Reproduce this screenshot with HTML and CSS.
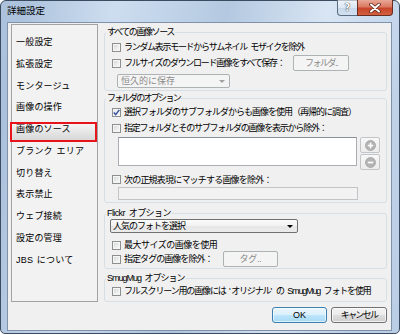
FILE: index.html
```html
<!DOCTYPE html>
<html lang="ja">
<head>
<meta charset="utf-8">
<title>詳細設定</title>
<link rel="stylesheet" href="styles.css">
</head>
<body>
<div class="window">
  <div class="titlebar">
    <span class="title">詳細設定</span>
    <div class="caption">
      <span class="cbtn help">?</span>
      <span class="cbtn close"><svg width="14" height="10" viewBox="0 0 14 10"><path d="M3 1.5 L11 8.5 M11 1.5 L3 8.5" stroke="#5a2418" stroke-width="3.6" stroke-linecap="round"/><path d="M3 1.5 L11 8.5 M11 1.5 L3 8.5" stroke="#fff" stroke-width="2" stroke-linecap="round"/></svg></span>
    </div>
  </div>
  <div class="client">
    <div class="body">
      <ul class="nav">
        <li><span class="t">一般設定</span></li>
        <li><span class="t">拡張設定</span></li>
        <li><span class="t">モンタージュ</span></li>
        <li><span class="t">画像の操作</span></li>
        <li class="sel"><span class="mark"></span><span class="t">画像のソース</span></li>
        <li><span class="t">ブランク エリア</span></li>
        <li><span class="t">切り替え</span></li>
        <li><span class="t">表示禁止</span></li>
        <li><span class="t">ウェブ接続</span></li>
        <li><span class="t">設定の管理</span></li>
        <li><span class="t">JBS について</span></li>
      </ul>
      <div class="panel">
        <fieldset class="group g1">
          <legend class="tight-14">すべての画像ソース</legend>
          <div class="row r16 first"><span class="cb"></span><span class="tight-13 wide-sp">ランダム表示モードからサムネイル モザイクを除外</span></div>
          <div class="row r16"><span class="cb"></span><span class="lbl-folder tight-13">フルサイズのダウンロード画像をすべて保存：</span><span class="btn dis folder tight-15">フォルダ..</span></div>
          <div class="combo dis c1"><span>恒久的に保存</span><span class="arrow"></span></div>
        </fieldset>
        <fieldset class="group g2">
          <legend class="tight-17">フォルダのオプション</legend>
          <div class="row r16"><span class="cb on"><svg width="7" height="7" viewBox="0 0 7 7"><path d="M0.8 3.6 L2.7 5.6 L6.3 0.9" fill="none" stroke="#3651a0" stroke-width="1.5"/></svg></span><span class="tight-10">選択フォルダのサブフォルダからも画像を使用（再帰的に調査）</span></div>
          <div class="row r16"><span class="cb"></span><span class="tight-12">指定フォルダとそのサブフォルダの画像を表示から除外：</span></div>
          <div class="listrow">
            <div class="listbox"></div>
            <div class="pm">
              <span class="pmbtn"><svg width="11" height="11" viewBox="0 0 11 11"><circle cx="5.5" cy="5.5" r="5" fill="#b4b4b4" stroke="#a2a2a2" stroke-width="0.8"/><path d="M5.5 2.8 V8.2 M2.8 5.5 H8.2" stroke="#fff" stroke-width="1.6"/></svg></span>
              <span class="pmbtn"><svg width="11" height="11" viewBox="0 0 11 11"><circle cx="5.5" cy="5.5" r="5" fill="#b4b4b4" stroke="#a2a2a2" stroke-width="0.8"/><path d="M2.8 5.5 H8.2" stroke="#fff" stroke-width="1.6"/></svg></span>
            </div>
          </div>
          <div class="row r15 regex"><span class="cb"></span><span class="tight-08">次の正規表現にマッチする画像を除外：</span></div>
          <div class="field dis"></div>
        </fieldset>
        <fieldset class="group g3">
          <legend class="tight-06 wide-sp">Flickr オプション</legend>
          <div class="combo c2"><span class="tight-10">人気のフォトを選択</span><span class="arrow"></span></div>
          <div class="row r14 max"><span class="cb"></span><span class="tight-05">最大サイズの画像を使用</span></div>
          <div class="row r14"><span class="cb"></span><span class="lbl-tag tight-09">指定タグの画像を除外：</span><span class="btn dis tag tight-03">タグ..</span></div>
        </fieldset>
        <fieldset class="group g4">
          <legend class="tight-10 wide-sp">SmugMug オプション</legend>
          <div class="row r14"><span class="cb"></span><span class="tight-11 wide-sp">フルスクリーン用の画像には <span class="q">'</span>オリジナル<span class="q">'</span> の SmugMug フォトを使用</span></div>
        </fieldset>
        <div class="footer">
          <span class="btn ok">OK</span>
          <span class="btn cancel tight-17">キャンセル</span>
        </div>
      </div>
    </div>
  </div>
</div>
</body>
</html>
```
FILE: styles.css
```css
* { box-sizing: border-box; }
html, body { margin: 0; padding: 0; background: #ffffff; }
body {
  font-family: "Liberation Sans", "Noto Sans CJK JP", sans-serif;
  font-size: 9px;
  line-height: 12px;
  color: #000;
}
/* Meiryo UI-like proportional kana: per-label tracking */
.tight-03 { letter-spacing: -0.3px; }
.tight-05 { letter-spacing: -0.5px; }
.tight-06 { letter-spacing: -0.6px; }
.tight-08 { letter-spacing: -0.8px; }
.tight-09 { letter-spacing: -0.95px; }
.tight-10 { letter-spacing: -1px; }
.tight-11 { letter-spacing: -1.15px; }
.tight-12 { letter-spacing: -1.2px; }
.tight-13 { letter-spacing: -1.3px; }
.tight-14 { letter-spacing: -1.4px; }
.tight-15 { letter-spacing: -1.5px; }
.tight-17 { letter-spacing: -1.7px; }
.wide-sp { word-spacing: 2px; }
.q { letter-spacing: 0.5px; }
.window {
  width: 400px;
  height: 334px;
  border: 1px solid #3b4b60;
  border-radius: 6px 6px 5px 5px;
  padding: 0 7px 2px 6px;
  display: flex;
  flex-direction: column;
  background:
    linear-gradient(100deg, rgba(110,140,180,0.3) 5%, rgba(255,255,255,0.1) 25%, rgba(120,150,185,0.25) 50%, rgba(255,255,255,0.3) 72%, rgba(150,175,205,0.15) 90%),
    linear-gradient(180deg, #c8daee 0%, #c0d3ea 100%);
}
.titlebar {
  height: 21px;
  display: flex;
  align-items: flex-start;
  flex: none;
}
.title {
  margin: 4px 0 0 0;
  font-size: 9.5px;
  color: #000;
}
.caption {
  margin-left: auto;
  margin-top: -1px;
  margin-right: -1px;
  display: flex;
}
.cbtn {
  height: 16px;
  display: flex;
  align-items: center;
  justify-content: center;
  border: 1px solid #5b6c82;
  border-top: none;
}
.help {
  width: 20px;
  border-radius: 0 0 0 4px;
  border-right: none;
  background: linear-gradient(180deg, rgba(255,255,255,0.65) 0%, rgba(225,235,245,0.6) 50%, rgba(190,208,228,0.6) 51%, rgba(210,225,240,0.7) 100%);
  color: #fff;
  font-family: "DejaVu Sans", sans-serif;
  font-weight: bold;
  font-size: 10px;
  text-shadow: 0 0 1px #333, 0 0 1px #333;
}
.close {
  width: 36px;
  border-radius: 0 0 4px 0;
  border-color: #6b2c22;
  background: linear-gradient(180deg, #e9a898 0%, #db7a63 45%, #c9452b 55%, #d2603f 100%);
}
.client {
  flex: 1;
  background: #f0f0f0;
  border: 1px solid #7f92a9;
  padding: 1px 4px 0 3px;
}
.body {
  display: flex;
  gap: 6px;
  align-items: flex-start;
}
.nav {
  width: 87px;
  height: 278px;
  margin: 0;
  padding: 7px 0 0 0;
  list-style: none;
  border: 1px solid #a3a3a3;
  background: #f2f2f2;
  letter-spacing: 0.2px;
  word-spacing: 1px;
}
.nav li {
  position: relative;
  height: 21.75px;
  line-height: 21.75px;
  padding-left: 4px;
  white-space: nowrap;
}
.nav li .t { position: relative; z-index: 1; }
.nav li .mark {
  position: absolute;
  left: -2px;
  top: 2.5px;
  width: 87px;
  height: 20.6px;
  border: 2px solid #e8141b;
  background: linear-gradient(180deg, #f6f6f6 0%, #e4e4e4 55%, #d8d8d8 100%);
  z-index: 0;
}
.panel {
  width: 283px;
  display: flex;
  flex-direction: column;
}
.group {
  margin: 0;
  min-width: 0;
  border: 1px solid #d5dfe5;
  border-radius: 3px;
  padding: 0 6px 2px 7px;
}
.group legend {
  padding: 0 1px;
  margin-left: -6px;
  line-height: 12px;
}
.g1 { margin-top: 2px; }
.g2 { margin-top: 1px; }
.g3 { margin-top: 4px; }
.g4 { margin-top: 3px; padding-bottom: 3px; }
.row {
  display: flex;
  align-items: center;
  white-space: nowrap;
}
.r16 { height: 16px; }
.r15 { height: 15px; }
.r14 { height: 14px; }
.first { margin-top: 1px; }
.cb {
  flex: none;
  width: 9px;
  height: 9px;
  margin-right: 3px;
  border: 1px solid #8e8f8f;
  background: linear-gradient(135deg, #cfd2d6 0%, #ececec 55%, #fbfbfb 100%);
  box-shadow: inset 0 0 0 1px #f6f6f6;
  display: flex;
  align-items: center;
  justify-content: center;
}
.cb.on { background: linear-gradient(135deg, #e8e8e8 0%, #fafafa 100%); }
.lbl-folder { flex: 0 0 169px; }
.lbl-tag { flex: 0 0 99px; }
.btn {
  display: flex;
  align-items: center;
  justify-content: center;
  white-space: nowrap;
  height: 16px;
  border-radius: 2px;
}
.btn.dis {
  border: 1px solid #adb2b5;
  background: #f4f4f4;
  color: #8a8a8a;
}
.folder { width: 56px; }
.tag { width: 55px; margin: -1px 0; }
.combo {
  height: 14px;
  display: flex;
  align-items: center;
  padding-left: 3px;
  border-radius: 2px;
}
.combo .arrow {
  margin-left: auto;
  margin-right: 4px;
  width: 0;
  height: 0;
  border-left: 3px solid transparent;
  border-right: 3px solid transparent;
  border-top: 3px solid #000;
}
.combo.dis {
  border: 1px solid #adb2b5;
  background: #f4f4f4;
  color: #8a8a8a;
}
.combo.dis .arrow { border-top-color: #a0a0a0; }
.c1 { width: 113px; margin: 3px 0 0 5px; }
.c2 {
  width: 188px;
  margin-left: -2px;
  padding-left: 2px;
  border: 1px solid #707070;
  background: linear-gradient(180deg, #fbfbfb 0%, #f1f1f1 50%, #e6e6e6 51%, #ebebeb 100%);
}
.max { margin-top: 5px; }
.listrow {
  display: flex;
  gap: 3px;
  margin: 1px 0 0 6px;
  height: 33px;
}
.listbox {
  width: 240px;
  height: 29px;
  background: #fff;
  border: 1px solid #abadb3;
  border-top-color: #8b8f96;
}
.pm { display: flex; flex-direction: column; gap: 1px; }
.pmbtn {
  width: 20px;
  height: 16px;
  border: 1px solid #c3c6c9;
  border-radius: 2px;
  background: linear-gradient(180deg, #f7f7f7, #ececec);
  display: flex;
  align-items: center;
  justify-content: center;
}
.regex { margin-top: 2px; }
.field {
  width: 240px;
  height: 13px;
  margin-left: 6px;
  border: 1px solid #c2c4c7;
  background: #f2f2f2;
}
.footer {
  display: flex;
  justify-content: flex-end;
  gap: 4px;
  margin-top: 5px;
}
.ok {
  width: 55px;
  border: 1px solid #3c7fb1;
  border-radius: 3px;
  background: linear-gradient(180deg, #eaf6fd 0%, #d9f0fc 50%, #bee6fd 51%, #a7d9f5 100%);
  box-shadow: inset 0 0 0 1px rgba(255,255,255,0.6);
}
.cancel {
  width: 56px;
  border: 1px solid #707070;
  border-radius: 3px;
  background: linear-gradient(180deg, #f2f2f2 0%, #ebebeb 50%, #dddddd 51%, #cfcfcf 100%);
  box-shadow: inset 0 0 0 1px rgba(255,255,255,0.7);
}
```
